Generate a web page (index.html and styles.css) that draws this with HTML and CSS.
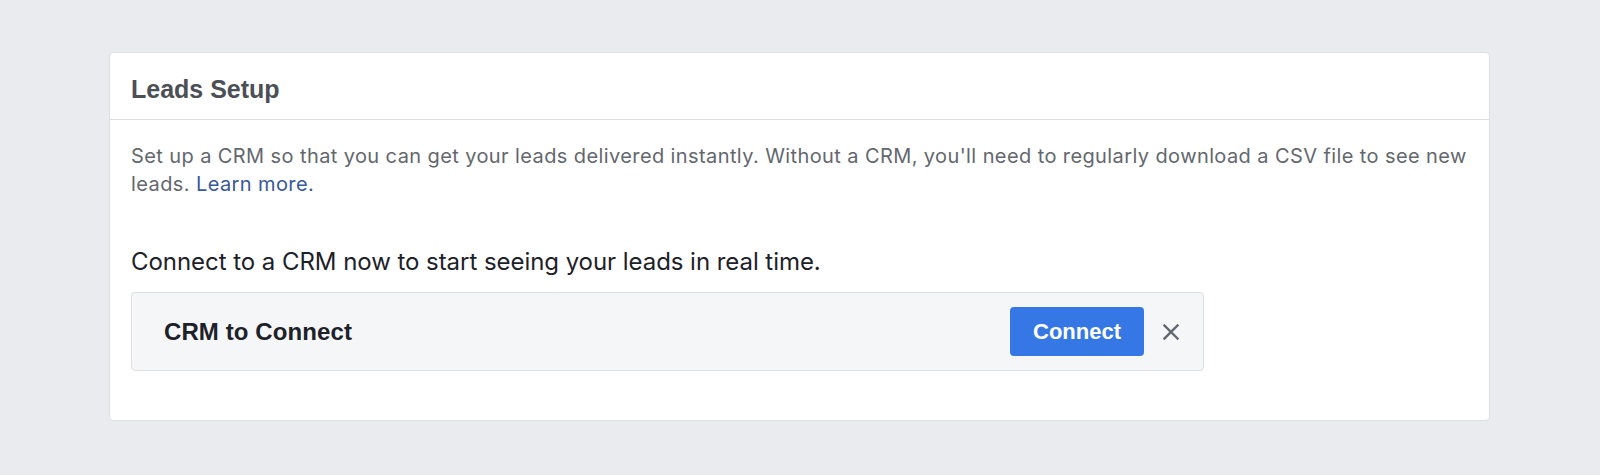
FILE: index.html
```html
<!DOCTYPE html>
<html lang="en">
<head>
<meta charset="utf-8">
<title>Leads Setup</title>
<link rel="stylesheet" href="styles.css">
</head>
<body>
<div class="page">
  <section class="card">
    <header class="card-header">
      <h2 class="card-title">Leads Setup</h2>
    </header>
    <div class="card-body">
      <p class="desc">Set up a CRM so that you can get your leads delivered instantly. Without a CRM, you'll need to regularly download a CSV file to see new leads. <a class="link" href="#">Learn more.</a></p>
      <p class="lead">Connect to a CRM now to start seeing your leads in real time.</p>
      <div class="crm-box">
        <span class="crm-name">CRM to Connect</span>
        <button class="btn-connect" type="button">Connect</button>
        <button class="btn-close" type="button" aria-label="Close">
          <svg width="16" height="16" viewBox="0 0 16 16"><path d="M1.5 1.5 L14.5 14.5 M14.5 1.5 L1.5 14.5" stroke="#606770" stroke-width="2.4" stroke-linecap="square" fill="none"/></svg>
        </button>
      </div>
    </div>
  </section>
</div>
</body>
</html>
```
FILE: styles.css
```css
html, body {
  margin: 0;
  padding: 0;
  background: #e9ebee;
}
.page {
  height: 475px;
  box-sizing: border-box;
  padding: 52px 110px 0 109px;
}
.card {
  background: #fff;
  border: 1px solid #dddfe2;
  border-radius: 4px;
}
.card-header {
  padding: 22px 21px 16px;
  border-bottom: 1px solid #dadde1;
}
.card-title {
  margin: 0;
  font-family: "Liberation Sans", Arial, sans-serif;
  font-weight: bold;
  font-size: 25px;
  line-height: 28px;
  color: #4b4f56;
}
.card-body {
  padding: 22px 21px 49px;
}
.desc {
  margin: 0;
  font-family: Inter, "Liberation Sans", sans-serif;
  font-size: 20px;
  line-height: 28px;
  letter-spacing: 0.4px;
  color: #63676e;
}
.link {
  color: #385898;
  text-decoration: none;
}
.lead {
  margin: 49px 0 15px;
  font-family: Inter, "Liberation Sans", sans-serif;
  font-size: 24px;
  line-height: 30px;
  letter-spacing: -0.05px;
  color: #1d2129;
}
.crm-box {
  width: 1073px;
  box-sizing: border-box;
  display: flex;
  align-items: center;
  background: #f5f6f7;
  border: 1px solid #dddfe2;
  border-radius: 4px;
  padding: 14px 24px 14px 32px;
}
.crm-name {
  flex: 1;
  font-family: "Liberation Sans", Arial, sans-serif;
  font-weight: bold;
  font-size: 24px;
  line-height: 28px;
  letter-spacing: 0.1px;
  color: #1d2129;
}
.btn-connect {
  height: 49px;
  padding: 0 23px;
  border: none;
  border-radius: 4px;
  background: #3578e5;
  color: #fff;
  font-family: "Liberation Sans", Arial, sans-serif;
  font-weight: bold;
  font-size: 22px;
}
.btn-close {
  margin-left: 19px;
  padding: 0;
  border: none;
  background: none;
  width: 16px;
  height: 16px;
  display: flex;
}
```
